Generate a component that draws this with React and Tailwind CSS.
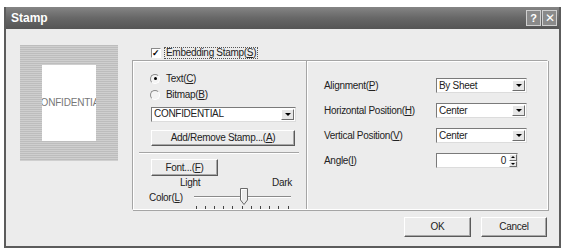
import React from 'react';

const font = { fontFamily: '"Liberation Sans", Arial, sans-serif' };

const Combo = ({ value, className = '' }) => (
  <div className={`flex h-[15px] items-center border border-t-[#7a7a7a] border-l-[#7a7a7a] border-r-[#dcdcdc] border-b-[#dcdcdc] bg-white ${className}`}>
    <span className="flex-1 pl-[2px] text-[10px] leading-none text-[#222]">{value}</span>
    <div className="mr-[1px] flex h-[11px] w-[13px] items-center justify-center border border-t-white border-l-white border-r-[#6d6d6d] border-b-[#6d6d6d] bg-[#e6e6e6]">
      <span className="block h-0 w-0 border-x-[3px] border-t-[3px] border-x-transparent border-t-black" />
    </div>
  </div>
);

const Button = ({ children, className = '' }) => (
  <div className={`flex items-center justify-center border border-t-white border-l-white border-r-[#5a5a5a] border-b-[#5a5a5a] bg-[#ececec] text-[10px] leading-none text-[#222] shadow-[inset_-1px_-1px_0_#a8a8a8] ${className}`}>
    {children}
  </div>
);

const Radio = ({ checked, label, k }) => (
  <div className="flex h-[15px] items-center gap-[6px]">
    <div className="flex h-[10px] w-[10px] items-center justify-center rounded-full border border-t-[#8a8a8a] border-l-[#8a8a8a] border-r-white border-b-white bg-[#f4f4f4]">
      {checked && <span className="block h-[3px] w-[3px] rounded-full bg-black" />}
    </div>
    <span className="text-[10px] leading-none text-[#222]">
      {label}(<u>{k}</u>)
    </span>
  </div>
);

const Row = ({ label, k, children }) => (
  <div className="flex items-center">
    <span className="w-[112px] text-[10px] leading-none text-[#222]">
      {label}(<u>{k}</u>)
    </span>
    {children}
  </div>
);

export default function App() {
  const ticks = Array.from({ length: 11 });
  return (
    <div className="h-[251px] w-[565px] bg-white pt-[7px] pl-[4px] tracking-[-0.3px]" style={font}>
      <div className="flex h-[241px] w-[557px] flex-col border-x-[2px] border-b-[2px] border-[#5c5c5c] bg-[#ececec]">
        {/* title bar */}
        <div className="flex h-[22px] items-center bg-gradient-to-b from-[#858585] via-[#676767] to-[#555] pl-[5px] pr-[2px]">
          <span className="flex-1 text-[12px] font-bold tracking-normal text-white">Stamp</span>
          <div className="flex gap-[1px]">
            <div className="flex h-[16px] w-[15px] items-center justify-center border border-[#d0d0d0] bg-[#8a8a8a] text-[11px] font-bold leading-none text-white">?</div>
            <div className="flex h-[16px] w-[15px] items-center justify-center border border-[#d0d0d0] bg-[#8a8a8a] text-[12px] leading-none text-white">✕</div>
          </div>
        </div>

        <div className="flex flex-1 pt-[16px] pl-[14px]">
          {/* preview */}
          <div className="flex h-[116px] w-[98px] items-start justify-center bg-[repeating-linear-gradient(180deg,#bdbdbd_0px,#bdbdbd_1px,#cfcfcf_1px,#cfcfcf_2px)] pt-[20px]">
            <div className="flex h-[76px] w-[54px] items-center justify-center overflow-hidden bg-white">
              <span className="whitespace-nowrap text-[10px] leading-none tracking-[-0.2px] text-[#777]">CONFIDENTIAL</span>
            </div>
          </div>

          <div className="ml-[14px] flex flex-col">
            <div className="ml-[19px] mt-[3px] flex h-[10px] items-center gap-[3px]">
              <div className="flex h-[10px] w-[10px] items-center justify-center border border-t-[#8a8a8a] border-l-[#8a8a8a] border-r-white border-b-white bg-white text-[9px] font-bold leading-none text-black">✓</div>
              <span className="border border-dotted border-[#555] px-[1px] text-[10px] leading-[10px] text-[#222]">
                Embedding Stamp(<u>S</u>)
              </span>
            </div>

            {/* group box */}
            <div className="mt-[2px] flex h-[150px] w-[416px] border border-t-[#a5a5a5] border-l-[#a5a5a5] border-r-white border-b-white shadow-[inset_1px_1px_0_white,1px_1px_0_#a5a5a5]">
              <div className="flex w-[173px] flex-col">
                <div className="ml-[17px] mt-[10px] flex flex-col gap-[1px]">
                  <Radio checked label="Text" k="C" />
                  <Radio label="Bitmap" k="B" />
                </div>
                <Combo value="CONFIDENTIAL" className="ml-[18px] mt-[5px] w-[145px]" />
                <Button className="ml-[18px] mt-[8px] h-[17px] w-[144px]">
                  Add/Remove Stamp...(<u>A</u>)
                </Button>
                <div className="ml-[6px] mt-[6px] h-[2px] w-[160px] border-t border-b border-t-[#a5a5a5] border-b-white" />
                <Button className="ml-[18px] mt-[5px] h-[17px] w-[67px]">
                  Font...(<u>F</u>)
                </Button>
                <div className="ml-[47px] mt-[2px] flex w-[112px] justify-between text-[10px] leading-none text-[#222]">
                  <span>Light</span>
                  <span>Dark</span>
                </div>
                <div className="flex items-start">
                  <span className="ml-[16px] mt-[5px] text-[10px] leading-none text-[#222]">
                    Color(<u>L</u>)
                  </span>
                  <div className="ml-[11px] flex w-[97px] flex-col">
                    <div className="relative h-[17px]">
                      <div className="absolute left-0 right-0 top-[8px] h-[2px] border-t border-b border-t-[#8a8a8a] border-b-white" />
                      <svg className="absolute left-[46px] top-0" width="8" height="17" viewBox="0 0 8 17">
                        <path d="M0.5 0.5 H7.5 V12 L4 16.5 L0.5 12 Z" fill="#ececec" stroke="#6a6a6a" />
                        <path d="M1.5 1.5 H6.5" stroke="#fff" />
                        <path d="M1.5 1.5 V12" stroke="#fff" />
                      </svg>
                    </div>
                    <div className="mt-[1px] flex justify-between px-[2px]">
                      {ticks.map((_, i) => (
                        <span key={i} className="block h-[3px] w-[1px] bg-[#444]" />
                      ))}
                    </div>
                  </div>
                </div>
              </div>

              <div className="w-[2px] border-l border-r border-l-[#a5a5a5] border-r-white" />

              <div className="flex flex-1 flex-col pl-[16px] pt-[17px]">
                <Row label="Alignment" k="P">
                  <Combo value="By Sheet" className="w-[91px]" />
                </Row>
                <div className="mt-[10px]">
                  <Row label="Horizontal Position" k="H">
                    <Combo value="Center" className="w-[91px]" />
                  </Row>
                </div>
                <div className="mt-[10px]">
                  <Row label="Vertical Position" k="V">
                    <Combo value="Center" className="w-[91px]" />
                  </Row>
                </div>
                <div className="mt-[10px]">
                  <Row label="Angle" k="I">
                    <div className="flex h-[15px] w-[82px] items-center border border-t-[#7a7a7a] border-l-[#7a7a7a] border-r-[#dcdcdc] border-b-[#dcdcdc] bg-white">
                      <span className="flex-1 pr-[3px] text-right text-[10px] leading-none text-[#222]">0</span>
                      <div className="flex h-[13px] w-[8px] flex-col">
                        <div className="flex flex-1 items-center justify-center border border-t-white border-l-white border-r-[#6d6d6d] border-b-[#6d6d6d] bg-[#e6e6e6]">
                          <span className="block h-0 w-0 border-x-[2px] border-b-[2px] border-x-transparent border-b-black" />
                        </div>
                        <div className="flex flex-1 items-center justify-center border border-t-white border-l-white border-r-[#6d6d6d] border-b-[#6d6d6d] bg-[#e6e6e6]">
                          <span className="block h-0 w-0 border-x-[2px] border-t-[2px] border-x-transparent border-t-black" />
                        </div>
                      </div>
                    </div>
                  </Row>
                </div>
              </div>
            </div>

            <div className="mt-[7px] flex justify-end gap-[10px] pr-[1px]">
              <Button className="h-[20px] w-[67px] border-[#333] shadow-[inset_-1px_-1px_0_#8a8a8a,inset_1px_1px_0_white]">OK</Button>
              <Button className="h-[20px] w-[66px]">Cancel</Button>
            </div>
          </div>
        </div>
      </div>
    </div>
  );
}
